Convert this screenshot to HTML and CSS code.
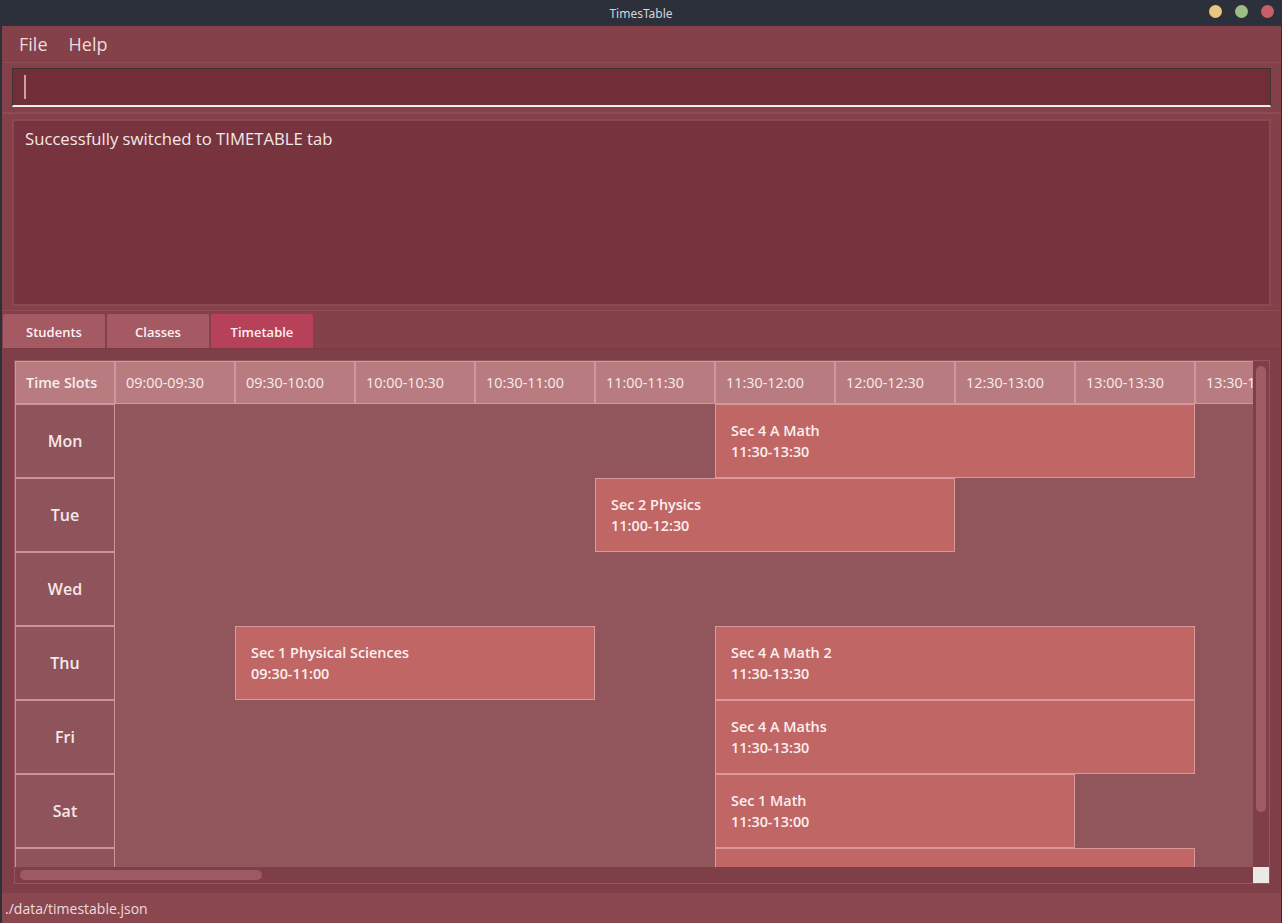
FILE: index.html
```html
<!DOCTYPE html>
<html>
<head>
<meta charset="utf-8">
<title>TimesTable</title>
<link rel="stylesheet" href="styles.css">
</head>
<body>
<div class="window">
  <header class="titlebar">
    <span class="title">TimesTable</span>
    <div class="controls">
      <span class="dot dot-min"></span>
      <span class="dot dot-max"></span>
      <span class="dot dot-close"></span>
    </div>
  </header>

  <nav class="menubar">
    <span class="menu-item">File</span>
    <span class="menu-item">Help</span>
  </nav>

  <section class="command-section">
    <div class="command-box"><span class="caret"></span></div>
  </section>

  <section class="result-section">
    <div class="result-box">Successfully switched to TIMETABLE tab</div>
  </section>

  <section class="tabpane">
    <div class="tabs">
      <div class="tab">Students</div>
      <div class="tab">Classes</div>
      <div class="tab active">Timetable</div>
    </div>
    <div class="tab-content">
      <div class="scrollpane">
        <div class="viewport">
          <div class="timetable">
            <div class="hcell first">Time Slots</div>
            <div class="hcell">09:00-09:30</div>
            <div class="hcell">09:30-10:00</div>
            <div class="hcell">10:00-10:30</div>
            <div class="hcell">10:30-11:00</div>
            <div class="hcell">11:00-11:30</div>
            <div class="hcell">11:30-12:00</div>
            <div class="hcell">12:00-12:30</div>
            <div class="hcell">12:30-13:00</div>
            <div class="hcell">13:00-13:30</div>
            <div class="hcell">13:30-14:00</div>
            <div class="hcell">14:00-14:30</div>
            <div class="hcell">14:30-15:00</div>
            <div class="hcell">15:00-15:30</div>
            <div class="hcell">15:30-16:00</div>
            <div class="hcell">16:00-16:30</div>
            <div class="hcell">16:30-17:00</div>
            <div class="hcell">17:00-17:30</div>
            <div class="hcell">17:30-18:00</div>

            <div class="day" style="grid-row: 2">Mon</div>
            <div class="day" style="grid-row: 3">Tue</div>
            <div class="day" style="grid-row: 4">Wed</div>
            <div class="day" style="grid-row: 5">Thu</div>
            <div class="day" style="grid-row: 6">Fri</div>
            <div class="day" style="grid-row: 7">Sat</div>
            <div class="day" style="grid-row: 8">Sun</div>

            <div class="event" style="grid-row: 2; grid-column: 7 / span 4"><span>Sec 4 A Math</span><span>11:30-13:30</span></div>
            <div class="event" style="grid-row: 3; grid-column: 6 / span 3"><span>Sec 2 Physics</span><span>11:00-12:30</span></div>
            <div class="event" style="grid-row: 5; grid-column: 3 / span 3"><span>Sec 1 Physical Sciences</span><span>09:30-11:00</span></div>
            <div class="event" style="grid-row: 5; grid-column: 7 / span 4"><span>Sec 4 A Math 2</span><span>11:30-13:30</span></div>
            <div class="event" style="grid-row: 6; grid-column: 7 / span 4"><span>Sec 4 A Maths</span><span>11:30-13:30</span></div>
            <div class="event" style="grid-row: 7; grid-column: 7 / span 3"><span>Sec 1 Math</span><span>11:30-13:00</span></div>
            <div class="event" style="grid-row: 8; grid-column: 7 / span 4"><span>Sec 4 A Math 3</span><span>11:30-13:30</span></div>
          </div>
        </div>
        <div class="vbar"><div class="vthumb"></div></div>
        <div class="hbar"><div class="hthumb"></div></div>
        <div class="corner"></div>
      </div>
    </div>
  </section>

  <footer class="statusbar">./data/timestable.json</footer>
</div>
</body>
</html>
```

FILE: styles.css
```css
* { box-sizing: border-box; }

html, body {
  margin: 0;
  padding: 0;
  width: 1282px;
  height: 923px;
  overflow: hidden;
  background: #85414a;
  font-family: "Open Sans", "Noto Sans", "DejaVu Sans", sans-serif;
}

.window {
  width: 1282px;
  height: 923px;
  display: flex;
  flex-direction: column;
  background: #85414a;
  border-left: 2px solid #2b303b;
  border-right: 1px solid #2b303b;
}

/* title bar */
.titlebar {
  height: 26px;
  flex: none;
  background: #2b303b;
  display: flex;
  align-items: center;
  justify-content: center;
  position: relative;
  margin: 0 -1px 0 -2px;
}
.title {
  color: #d3d6dc;
  font-size: 12px;
  font-family: "Noto Sans", "DejaVu Sans", sans-serif;
}
.controls {
  position: absolute;
  right: 8px;
  top: 5px;
  display: flex;
  gap: 13px;
}
.dot {
  width: 13px;
  height: 13px;
  border-radius: 50%;
  display: block;
}
.dot-min { background: #e8c580; }
.dot-max { background: #9dbd84; }
.dot-close { background: #c5606a; }

/* menu */
.menubar {
  height: 37px;
  flex: none;
  display: flex;
  align-items: center;
  gap: 21px;
  padding-left: 17px;
  border-bottom: 1px solid #904c55;
}
.menu-item {
  color: #eadcdc;
  font-size: 18px;
  font-weight: 400;
}

/* command box */
.command-section {
  flex: none;
  padding: 5px 10px 5px 10px;
  border-bottom: 2px solid #8f4b54;
}
.command-box {
  height: 39px;
  background: #712e38;
  border: 1px solid #3e3434;
  border-bottom: 2px solid #f4eeee;
  display: flex;
  align-items: center;
  padding-left: 11px;
}
.caret {
  width: 2px;
  height: 24px;
  background: #c8a3a6;
}

/* result */
.result-section {
  flex: none;
  padding: 5px 10px 4px 10px;
  border-bottom: 1px solid #8f4b54;
}
.result-box {
  height: 187px;
  background: #78343e;
  border: 2px solid #8c4851;
  padding: 7px 11px;
  color: #f3e8e8;
  font-size: 16.7px;
  line-height: 22px;
}

/* tabs */
.tabpane {
  flex: 1;
  display: flex;
  flex-direction: column;
  min-height: 0;
  padding: 0 1px 0 1px;
}
.tabs {
  flex: none;
  height: 37px;
  display: flex;
  align-items: flex-end;
  gap: 2px;
  padding-left: 0;
}
.tab {
  width: 102px;
  height: 34px;
  background: #a45963;
  border-radius: 2px 2px 0 0;
  color: #fbf2f2;
  font-size: 13px;
  font-weight: 600;
  display: flex;
  align-items: center;
  justify-content: center;
  padding-top: 2px;
}
.tab.active { background: #b8415a; }

.tab-content {
  flex: 1;
  min-height: 0;
  background: #7f3f48;
  border-top: 1px solid #7a3a43;
  padding: 11px 10px 9px 11px;
  display: flex;
}

/* scroll pane */
.scrollpane {
  flex: 1;
  min-width: 0;
  border: 1px solid #975560;
  display: grid;
  grid-template-columns: 1fr 16px;
  grid-template-rows: 1fr 16px;
  background: #7f3f48;
}
.viewport {
  overflow: hidden;
  min-width: 0;
  min-height: 0;
  background: #91555c;
}
.vbar {
  background: #7f3f48;
  padding: 5px 3px;
}
.vthumb {
  height: 446px;
  border-radius: 5px;
  background: #a05c65;
}
.hbar {
  background: #7f3f48;
  padding: 3px 5px;
}
.hthumb {
  width: 242px;
  height: 10px;
  border-radius: 5px;
  background: #9e5a64;
}
.corner {
  background: #ebe8e8;
}

/* timetable */
.timetable {
  display: grid;
  grid-template-columns: 100px repeat(18, 120px);
  grid-template-rows: 43px repeat(7, 74px);
  width: max-content;
  background: #91555c;
}
.hcell {
  grid-row: 1;
  background: #b77b80;
  border: 1px solid #cc9a9e;
  color: #f7eeee;
  font-size: 14.4px;
  display: flex;
  align-items: center;
  padding-left: 10px;
  white-space: nowrap;
}
.hcell.first {
  font-weight: 600;
}
.day {
  grid-column: 1;
  background: #8f535b;
  border: 1px solid #c9959b;
  color: #f4e8e8;
  font-size: 16px;
  font-weight: 600;
  display: flex;
  align-items: center;
  justify-content: center;
}
.event {
  background: #c06664;
  border: 1px solid #d9999a;
  color: #fbf0f0;
  font-size: 14.4px;
  font-weight: 600;
  line-height: 21px;
  display: flex;
  flex-direction: column;
  justify-content: center;
  padding-left: 15px;
  white-space: nowrap;
}

/* status */
.statusbar {
  flex: none;
  height: 30px;
  background: #8b4750;
  color: #ecdede;
  font-size: 14px;
  display: flex;
  align-items: center;
  padding-left: 3px;
}
```
